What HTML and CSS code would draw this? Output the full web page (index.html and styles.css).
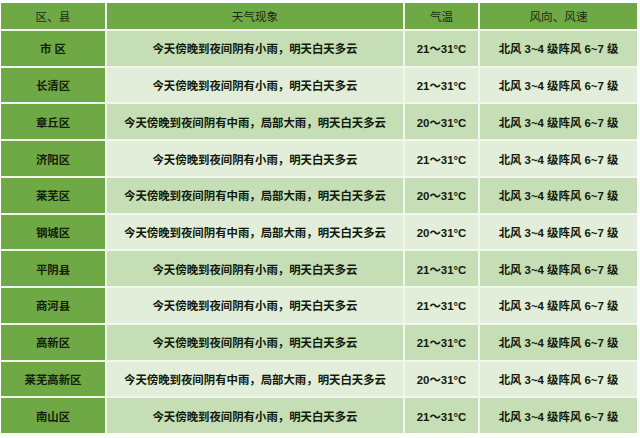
FILE: index.html
```html
<!DOCTYPE html>
<html lang="zh-CN">
<head>
<meta charset="utf-8">
<title>天气预报</title>
<link rel="stylesheet" href="styles.css">
</head>
<body>
<div class="table">
  <div class="cell head">区、县</div>
  <div class="cell head">天气现象</div>
  <div class="cell head">气温</div>
  <div class="cell head">风向、风速</div>

  <div class="cell name">市 区</div>
  <div class="cell dark">今天傍晚到夜间阴有小雨，明天白天多云</div>
  <div class="cell dark">21～31°C</div>
  <div class="cell dark">北风 3~4 级阵风 6~7 级</div>

  <div class="cell name">长清区</div>
  <div class="cell light">今天傍晚到夜间阴有小雨，明天白天多云</div>
  <div class="cell light">21～31°C</div>
  <div class="cell light">北风 3~4 级阵风 6~7 级</div>

  <div class="cell name">章丘区</div>
  <div class="cell dark">今天傍晚到夜间阴有中雨，局部大雨，明天白天多云</div>
  <div class="cell dark">20～31°C</div>
  <div class="cell dark">北风 3~4 级阵风 6~7 级</div>

  <div class="cell name">济阳区</div>
  <div class="cell light">今天傍晚到夜间阴有小雨，明天白天多云</div>
  <div class="cell light">21～31°C</div>
  <div class="cell light">北风 3~4 级阵风 6~7 级</div>

  <div class="cell name">莱芜区</div>
  <div class="cell dark">今天傍晚到夜间阴有中雨，局部大雨，明天白天多云</div>
  <div class="cell dark">20～31°C</div>
  <div class="cell dark">北风 3~4 级阵风 6~7 级</div>

  <div class="cell name">钢城区</div>
  <div class="cell light">今天傍晚到夜间阴有中雨，局部大雨，明天白天多云</div>
  <div class="cell light">20～31°C</div>
  <div class="cell light">北风 3~4 级阵风 6~7 级</div>

  <div class="cell name">平阴县</div>
  <div class="cell dark">今天傍晚到夜间阴有小雨，明天白天多云</div>
  <div class="cell dark">21～31°C</div>
  <div class="cell dark">北风 3~4 级阵风 6~7 级</div>

  <div class="cell name">商河县</div>
  <div class="cell light">今天傍晚到夜间阴有小雨，明天白天多云</div>
  <div class="cell light">21～31°C</div>
  <div class="cell light">北风 3~4 级阵风 6~7 级</div>

  <div class="cell name">高新区</div>
  <div class="cell dark">今天傍晚到夜间阴有小雨，明天白天多云</div>
  <div class="cell dark">21～31°C</div>
  <div class="cell dark">北风 3~4 级阵风 6~7 级</div>

  <div class="cell name">莱芜高新区</div>
  <div class="cell light">今天傍晚到夜间阴有中雨，局部大雨，明天白天多云</div>
  <div class="cell light">20～31°C</div>
  <div class="cell light">北风 3~4 级阵风 6~7 级</div>

  <div class="cell name">南山区</div>
  <div class="cell dark">今天傍晚到夜间阴有小雨，明天白天多云</div>
  <div class="cell dark">21～31°C</div>
  <div class="cell dark">北风 3~4 级阵风 6~7 级</div>
</div>
</body>
</html>
```
FILE: styles.css
```css
html, body {
  margin: 0;
  padding: 0;
  background: #ffffff;
}

body {
  padding: 3px 3px 0 1px;
  font-family: "Liberation Sans", "Noto Sans CJK SC", sans-serif;
}

.table {
  width: 636px;
  height: 430px;
  display: grid;
  grid-template-columns: 104px 296px 73px 1fr;
  grid-template-rows: 26px repeat(11, 1fr);
  gap: 2px;
  background: #f1f7ec;
}

.cell {
  display: flex;
  align-items: center;
  justify-content: center;
  font-size: 11.4px;
  font-weight: 700;
  color: #111a0c;
  white-space: nowrap;
}

.head {
  background: #6ea945;
  color: #1b2a10;
  font-weight: 400;
  font-size: 11.6px;
}

.name {
  background: #6ea945;
  color: #142008;
}

.dark {
  background: #c6deb5;
}

.light {
  background: #e2eed9;
}
```
